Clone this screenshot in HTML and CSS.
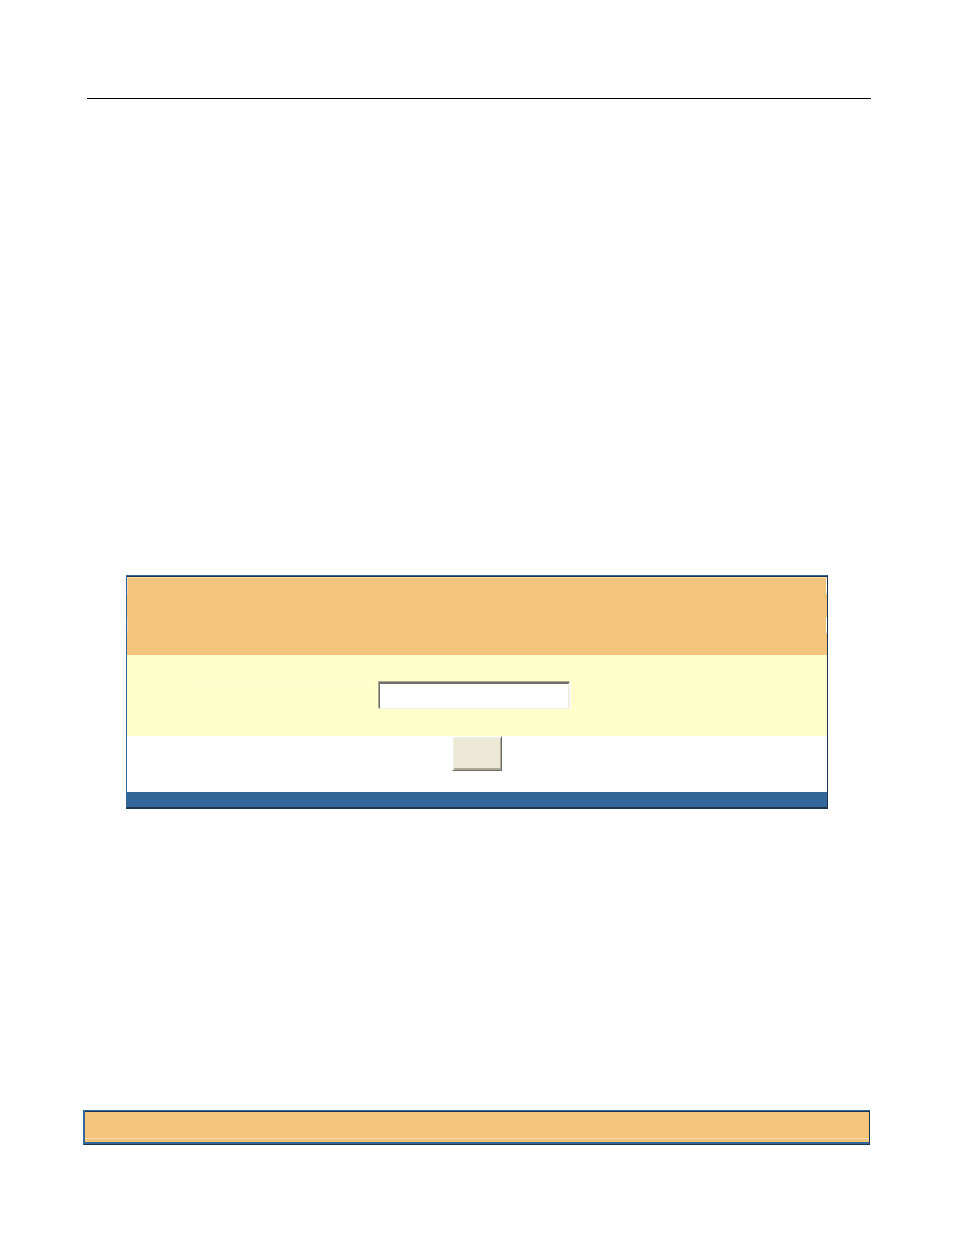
FILE: index.html
```html
<!DOCTYPE html>
<html lang="en">
<head>
<meta charset="utf-8">
<title>Form</title>
<link rel="stylesheet" href="styles.css">
</head>
<body>
<div class="page">
  <hr class="rule">
  <form class="panel">
    <header class="panel-header"></header>
    <div class="panel-field">
      <label class="field-label" for="entry"></label>
      <input class="field-input" id="entry" type="text">
    </div>
    <div class="panel-actions">
      <button class="panel-button" type="button"></button>
    </div>
    <div class="panel-footer"></div>
  </form>
  <footer class="bar"></footer>
</div>
</body>
</html>
```

FILE: styles.css
```css
* {
  box-sizing: border-box;
}

body {
  margin: 0;
  background: #fff;
  font-family: "Liberation Sans", Arial, sans-serif;
  font-size: 14px;
}

.page {
  display: flex;
  flex-direction: column;
  min-height: 100vh;
  padding: 98px 83px 90px;
}

.rule {
  align-self: stretch;
  height: 1px;
  margin: 0 0 0 4px;
  border: 0;
  background: #000;
}

.panel {
  margin: 476px 43px 48px;
  border: 1px solid #336699;
  border-right-color: #1c3552;
  border-bottom: 2px solid #1c3552;
}

.panel-header {
  height: 79px;
  border-top: 1px solid #1c3552;
  background:
    linear-gradient(#fbdcae, #fbdcae) top / 100% 1px no-repeat,
    linear-gradient(#fff, #fff) right 0 top 0 / 1px 17px no-repeat,
    linear-gradient(#fff, #fff) right 0 top 40px / 1px 16px no-repeat,
    linear-gradient(#f5d5ae, #f5d5ae) left 0 top 0 / 1px 17px no-repeat,
    linear-gradient(#f5d5ae, #f5d5ae) left 0 top 40px / 1px 16px no-repeat,
    #f3c47c;
}

.panel-field {
  display: flex;
  justify-content: center;
  gap: 7px;
  padding: 26px 0 27px;
  background: #ffffcc;
}

.field-label {
  width: 180px;
  height: 4px;
  margin-left: -192px;
  border: 1px solid #ffffd9;
  border-width: 1px 0;
}

.field-input {
  width: 191px;
  height: 27px;
  margin-top: 1px;
  padding: 0 4px;
  border: solid;
  border-width: 2px 2px 1px 1px;
  border-color: #716f64 #f1efe2 #f1efe2 #716f64;
  border-radius: 0;
  outline: 0;
  background: #fff;
  box-shadow: -1px -1px 0 #aca899, 1px 0 0 #fff;
  font: inherit;
}

.panel-actions {
  display: flex;
  justify-content: center;
  padding-bottom: 21px;
  background: #fff;
}

.panel-button {
  width: 50px;
  height: 35px;
  padding: 0;
  border: solid;
  border-width: 1px;
  border-color: #fff #716f64 #716f64 #fff;
  border-radius: 0;
  background: #ece9d8;
  box-shadow: inset 1px 1px 0 #f1efe2, inset -1px -2px 0 #aca899;
}

.panel-footer {
  height: 15px;
  background: #336699;
}

.bar {
  height: 35px;
  margin: auto 1px 0 0;
  border: solid;
  border-width: 1px 1px 1px 2px;
  border-color: #336699 #1c3552 #1c3552 #336699;
  background:
    linear-gradient(#1c3552, #1c3552) top / 100% 1px no-repeat,
    linear-gradient(#336699, #336699) bottom / 100% 2px no-repeat,
    linear-gradient(#f9dbaf, #f9dbaf) left 0 bottom 5px / 100% 1px no-repeat,
    #f3c47c;
}
```
